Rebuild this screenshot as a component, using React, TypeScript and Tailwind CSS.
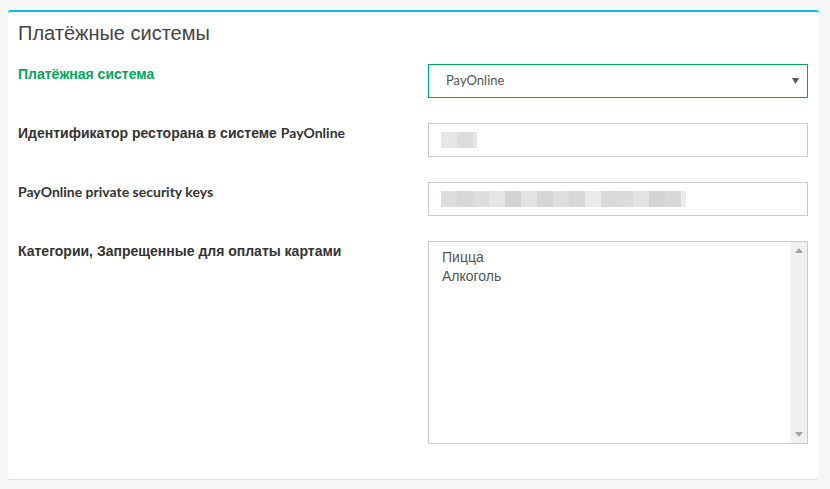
import React from "react";

const latin = "font-['Lato','Liberation_Sans',sans-serif]";
const cyr = "font-['Liberation_Sans','Arial',sans-serif]";

const blur1 = ["#e7e7e7", "#dcdcdc", "#e4e4e4"];
const blur2 = [
  "#dedcdc",
  "#d8d8d8",
  "#dddddd",
  "#e6e6e6",
  "#d3d3d3",
  "#e2e4e4",
  "#d6d6d4",
  "#dededc",
  "#d6d8d8",
  "#ebeae8",
  "#d8dada",
  "#dadcdc",
  "#e3e3e3",
  "#d4d4d4",
  "#d8d8d8",
  "#e9ecef",
];

function Blur({ cells, last }: { cells: string[]; last: number }) {
  return (
    <div className="flex h-[16px]">
      {cells.map((c, i) => (
        <div
          key={i}
          className="h-full"
          style={{ background: c, width: i === cells.length - 1 ? last : 16 }}
        />
      ))}
    </div>
  );
}

function Label({ children, green }: { children: React.ReactNode; green?: boolean }) {
  return (
    <div
      className={`text-[14px] leading-[20px] font-bold ${cyr} ${green ? "text-[#00a65a]" : "text-[#333]"}`}
    >
      {children}
    </div>
  );
}

export default function App() {
  return (
    <div className="min-h-screen bg-[#f7f7f7] pt-[10px] pl-[8px]">
      <div className="w-[811px] h-[469px] rounded-[3px] border-t-2 border-[#00c0ef] bg-white shadow-[0_1px_1px_rgba(0,0,0,0.1)]">
        {/* Header */}
        <div className="px-[10px] pt-[11px]">
          <h3 className={`text-[20px] leading-[20px] text-[#444] ${cyr}`}>Платёжные системы</h3>
        </div>

        {/* Form */}
        <div className="mt-[21px] pl-[10px] pr-[11px] flex flex-col gap-[25px]">
          <div className="grid grid-cols-[410px_380px]">
            <Label green>Платёжная система</Label>
            <div className="relative h-[34px] border border-[#00a65a] bg-white flex items-center">
              <span className={`pl-[17px] text-[13px] text-[#555] ${latin}`}>PayOnline</span>
              <svg className="absolute right-[8px] top-[13px]" width="7" height="6" viewBox="0 0 7 6">
                <path d="M0 0h7L3.5 6z" fill="#555" />
              </svg>
            </div>
          </div>

          <div className="grid grid-cols-[410px_380px]">
            <Label>
              Идентификатор ресторана в системе <span className={latin}>PayOnline</span>
            </Label>
            <div className="h-[34px] border border-[#ccc] bg-white flex items-center pl-[12px]">
              <Blur cells={blur1} last={4} />
            </div>
          </div>

          <div className="grid grid-cols-[410px_380px]">
            <Label>
              <span className={latin}>PayOnline private security keys</span>
            </Label>
            <div className="h-[34px] border border-[#ccc] bg-white flex items-center pl-[12px]">
              <Blur cells={blur2} last={5} />
            </div>
          </div>

          <div className="grid grid-cols-[410px_380px]">
            <Label>Категории, Запрещенные для оплаты картами</Label>
            <div className="h-[203px] border border-[#ccc] bg-white flex">
              <div className={`flex-1 px-[13px] py-[6px] text-[14px] leading-[19px] text-[#555] ${cyr}`}>
                <div>Пицца</div>
                <div>Алкоголь</div>
              </div>
              <div className="w-[16px] bg-[#f0f0f0] flex flex-col justify-between items-center py-[6px]">
                <svg width="8" height="5" viewBox="0 0 8 5">
                  <path d="M4 0L8 5H0z" fill="#a3a3a3" />
                </svg>
                <svg width="8" height="5" viewBox="0 0 8 5">
                  <path d="M0 0h8L4 5z" fill="#a3a3a3" />
                </svg>
              </div>
            </div>
          </div>
        </div>
      </div>
    </div>
  );
}
